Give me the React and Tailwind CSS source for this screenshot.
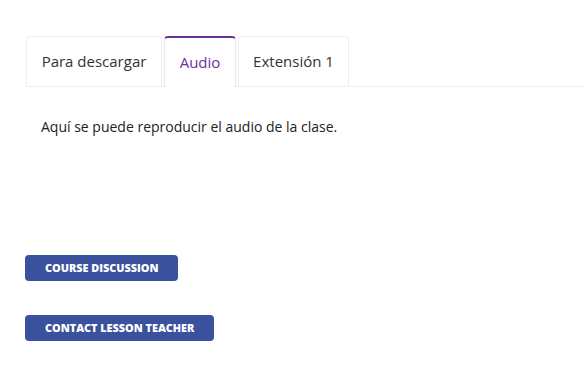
export default function App() {
    return (
        <div className="min-h-[369px] bg-white font-['Open_Sans',sans-serif] text-[#333]">
            <div className="pt-9 pl-[26px]">
                <div className="flex gap-[2px] border-b border-[#eeeeee]">
                    <button className="w-[136px] h-[50px] text-[15px] text-[#333] border border-b-0 border-[#eeeeee] rounded-t-[4px] -mb-px bg-white">
                        Para descargar
                    </button>
                    <button className="w-[72px] h-[51px] text-[15px] text-[#663399] border border-b-0 border-[#e5e5e5] border-t-2 border-t-[#663399] rounded-t-[4px] -mb-px bg-white">
                        Audio
                    </button>
                    <button className="w-[111px] h-[50px] text-[15px] text-[#333] border border-b-0 border-[#eeeeee] rounded-t-[4px] -mb-px bg-white">
                        Extensión 1
                    </button>
                </div>
                <p className="pl-[15px] pt-[29px] text-[14px] text-[#222]">
                    Aquí se puede reproducir el audio de la clase.
                </p>
            </div>
            <div className="pl-[25px] pt-[118px] flex flex-col items-start gap-[34px]">
                <button className="h-[26px] px-5 rounded-[4px] bg-[#3a519e] text-white text-[10.85px] font-extrabold uppercase">
                    Course Discussion
                </button>
                <button className="h-[26px] px-5 rounded-[4px] bg-[#3a519e] text-white text-[10.85px] font-extrabold uppercase">
                    Contact Lesson Teacher
                </button>
            </div>
        </div>
    );
}
